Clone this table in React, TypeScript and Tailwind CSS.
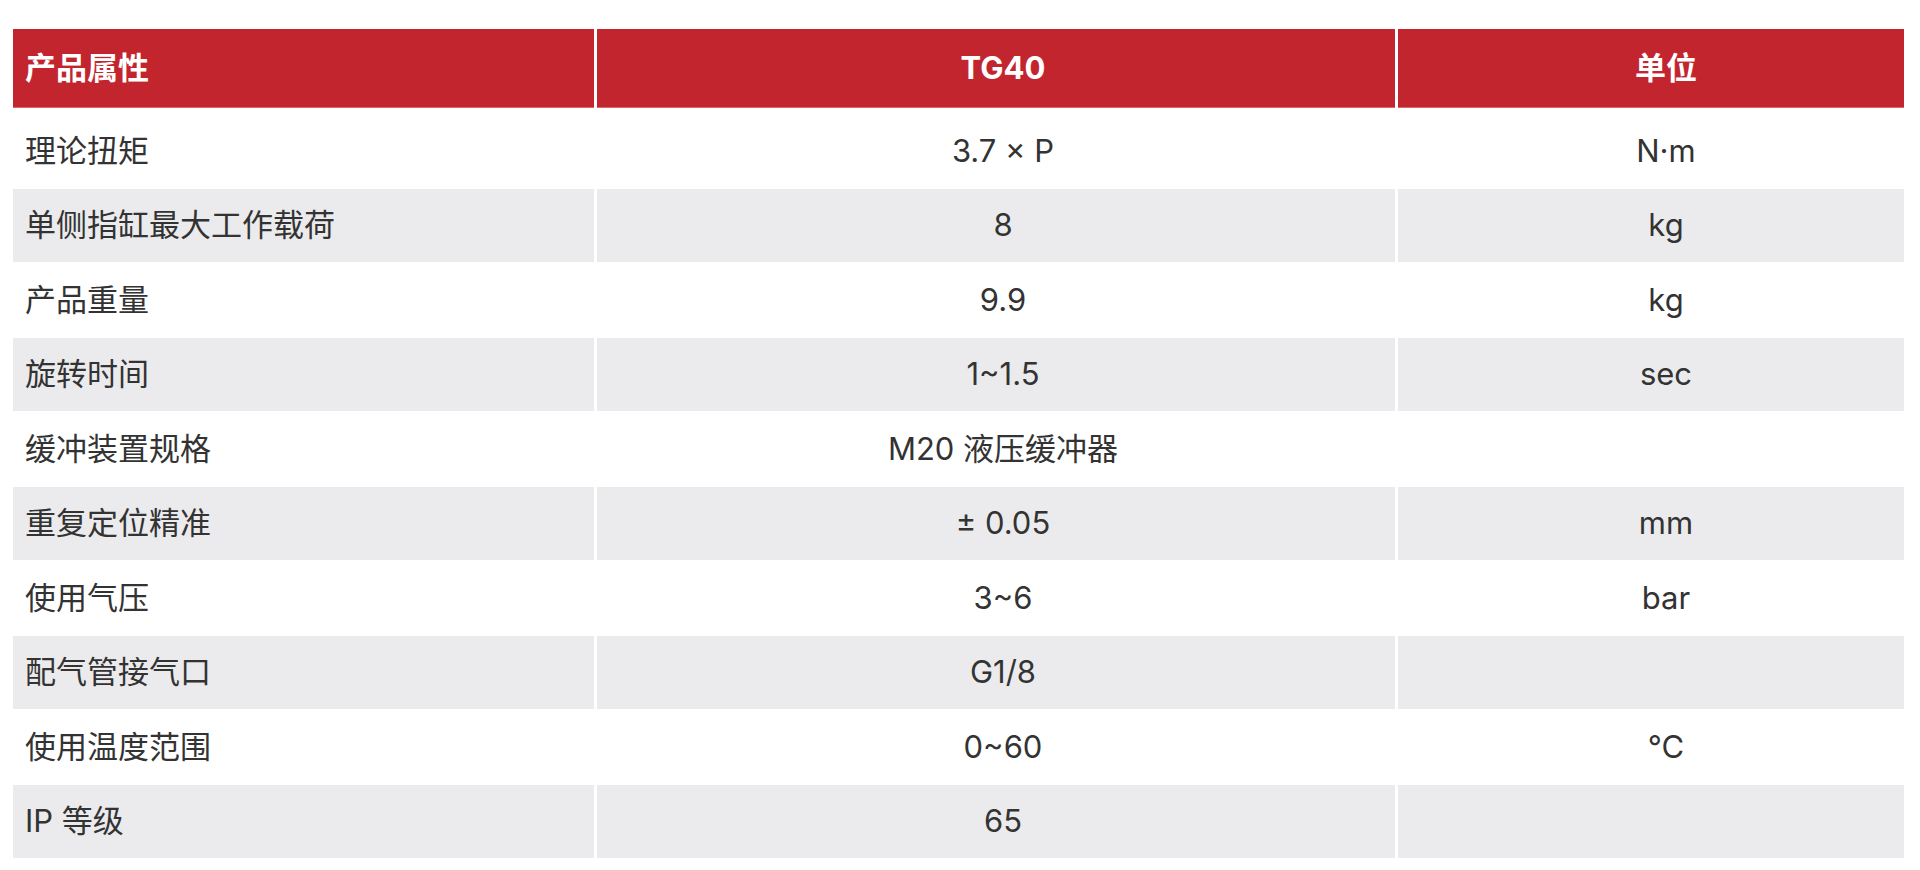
import React from "react";

type Spec = { name: string; value: string; unit: string };

const specs: Spec[] = [
  { name: "理论扭矩", value: "3.7 × P", unit: "N·m" },
  { name: "单侧指缸最大工作载荷", value: "8", unit: "kg" },
  { name: "产品重量", value: "9.9", unit: "kg" },
  { name: "旋转时间", value: "1~1.5", unit: "sec" },
  { name: "缓冲装置规格", value: "M20 液压缓冲器", unit: "" },
  { name: "重复定位精准", value: "± 0.05", unit: "mm" },
  { name: "使用气压", value: "3~6", unit: "bar" },
  { name: "配气管接气口", value: "G1/8", unit: "" },
  { name: "使用温度范围", value: "0~60", unit: "°C" },
  { name: "IP 等级", value: "65", unit: "" },
];

const font = { fontFamily: 'Inter, "Noto Sans CJK SC", sans-serif' };

export default function App() {
  return (
    <div className="min-h-screen bg-white" style={font}>
      <div className="ml-[13px] pt-[29px] w-[1891px]">
        {/* Header */}
        <div className="grid grid-cols-[581px_798px_506px] gap-x-[3px] h-[79px] text-[31px] font-bold text-white">
          <div className="flex items-center pl-[12px] bg-[#c3252f] border-b border-[#e0646b]">
            产品属性
          </div>
          <div className="flex items-center justify-center pl-[14px] bg-[#c3252f] border-b border-[#e0646b]">
            TG40
          </div>
          <div className="flex items-center justify-center pl-[30px] bg-[#c3252f] border-b border-[#e0646b]">
            单位
          </div>
        </div>

        {/* Rows */}
        <div className="pt-[6px] text-[31px] text-[#333333]">
          {specs.map((row, i) => {
            const bg = i % 2 === 1 ? "bg-[#ebebed]" : "bg-white";
            return (
              <div
                key={row.name}
                className="grid grid-cols-[581px_798px_506px] gap-x-[3px] h-[74.5px]"
              >
                <div className={`flex items-center pl-[12px] border-b border-white ${bg}`}>
                  {row.name}
                </div>
                <div className={`flex items-center justify-center pl-[14px] border-b border-white ${bg}`}>
                  {row.value}
                </div>
                <div className={`flex items-center justify-center pl-[30px] border-b border-white ${bg}`}>
                  {row.unit}
                </div>
              </div>
            );
          })}
        </div>
      </div>
    </div>
  );
}
